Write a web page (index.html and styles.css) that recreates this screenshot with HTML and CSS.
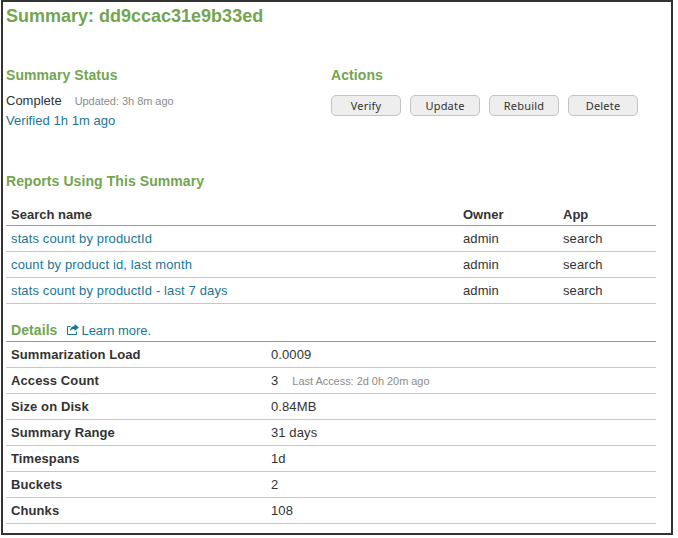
FILE: index.html
```html
<!DOCTYPE html>
<html lang="en">
<head>
<meta charset="utf-8">
<title>Summary: dd9ccac31e9b33ed</title>
<link rel="stylesheet" href="styles.css">
</head>
<body>
<main class="panel">
  <h1 class="title">Summary: dd9ccac31e9b33ed</h1>
  <div class="top">
    <section class="status">
      <h2 class="heading status-heading">Summary Status</h2>
      <p class="line"><span class="complete">Complete</span><span class="note updated">Updated: 3h 8m ago</span></p>
      <p class="line"><a class="link verified">Verified 1h 1m ago</a></p>
    </section>
    <section class="actions">
      <h2 class="heading actions-heading">Actions</h2>
      <div class="buttons">
        <button class="button">Verify</button>
        <button class="button">Update</button>
        <button class="button">Rebuild</button>
        <button class="button">Delete</button>
      </div>
    </section>
  </div>
  <h2 class="heading reports-heading">Reports Using This Summary</h2>
  <table class="table reports">
    <thead><tr><th class="name-col">Search name</th><th class="owner-col">Owner</th><th>App</th></tr></thead>
    <tbody>
      <tr><td><a class="link">stats count by productId</a></td><td>admin</td><td>search</td></tr>
      <tr><td><a class="link">count by product id, last month</a></td><td>admin</td><td>search</td></tr>
      <tr><td><a class="link">stats count by productId - last 7 days</a></td><td>admin</td><td>search</td></tr>
    </tbody>
  </table>
  <div class="details-head">
    <h2 class="heading">Details</h2>
    <a class="link learn"><svg class="icon" width="13" height="12" viewBox="0 0 13 12"><path d="M3.500 2.500H0.500V10.500H9.500V7.500" fill="none" stroke="currentColor"/><path d="M7.500 0L12 3.500L7.500 7V5C5.500 4.800 4 5.500 2.800 7.500C3 4.500 4.500 2.300 7.500 2Z" fill="currentColor"/></svg>Learn more.</a>
  </div>
  <table class="table details">
    <tbody>
      <tr><th class="label-col">Summarization Load</th><td>0.0009</td></tr>
      <tr><th>Access Count</th><td>3<span class="note access">Last Access: 2d 0h 20m ago</span></td></tr>
      <tr><th>Size on Disk</th><td>0.84MB</td></tr>
      <tr><th>Summary Range</th><td>31 days</td></tr>
      <tr><th>Timespans</th><td>1d</td></tr>
      <tr><th>Buckets</th><td>2</td></tr>
      <tr><th>Chunks</th><td>108</td></tr>
    </tbody>
  </table>
</main>
</body>
</html>
```
FILE: styles.css
```css
* { box-sizing: border-box; }
body { margin: 0; background: #fff; font: 13px/20px "Liberation Sans", Arial, sans-serif; color: #333; }
h1, h2, p { margin: 0; }
.panel { width: 672px; height: 535px; margin-left: 1px; padding: 3px 15px 0 3px; border: 2px solid #333; }
.title { color: #73a550; font-size: 18px; line-height: 22px; }
.heading { color: #73a550; font-size: 14px; line-height: 20px; letter-spacing: 0.08px; }
.top { display: flex; height: 106px; margin-top: 38px; }
.status { width: 325px; }
.line { line-height: 20px; }
.status-heading { margin-bottom: 6px; }
.note { color: #8c8c8c; font-size: 11px; letter-spacing: -0.04px; }
.updated { margin-left: 13px; }
.access { margin-left: 14px; }
.link { color: #1a7693; }
.verified { letter-spacing: 0.05px; }
.buttons { display: flex; gap: 9px; margin-top: 10px; }
.button { width: 70px; height: 21px; padding: 0; border: 1px solid #c3c3c3; border-radius: 5px; background: #eee; color: #333; font: 11px/17px "Noto Sans", "Open Sans", sans-serif; letter-spacing: 0.2px; }
.table { width: 650px; border-collapse: separate; border-spacing: 0; table-layout: fixed; letter-spacing: 0.1px; }
.table th, .table td { height: 26px; padding: 0 5px; border-bottom: 1px solid #c8c8c8; text-align: left; line-height: 20px; }
.table td .link { letter-spacing: 0.13px; }
.reports { margin-top: 9px; }
.table thead th { padding-top: 4px; border-color: #999; letter-spacing: 0; }
.name-col { width: 452px; }
.owner-col { width: 100px; }
.details-head { display: flex; align-items: center; gap: 10px; height: 38px; padding: 16px 5px 0; border-bottom: 1px solid #999; }
.details-head .heading { margin-top: -2px; }
.learn { display: flex; align-items: center; gap: 1px; letter-spacing: -0.05px; }
.icon { margin-top: -2px; }
.label-col { width: 260px; }
```
